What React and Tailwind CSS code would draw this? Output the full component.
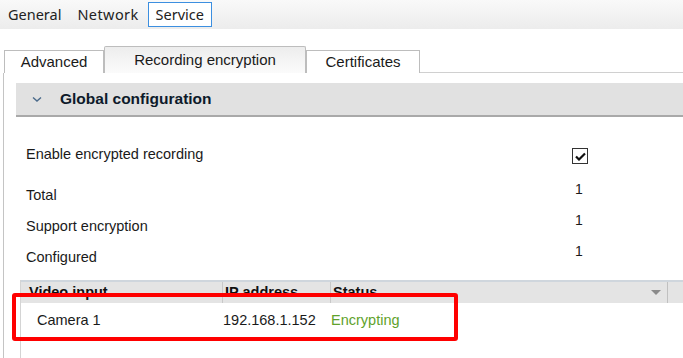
import React from 'react';

const rows = [
  { label: 'Total', value: '1' },
  { label: 'Support encryption', value: '1' },
  { label: 'Configured', value: '1' },
];

const App = () => {
  return (
    <div className="relative w-[683px] h-[358px] overflow-hidden bg-white text-[#1a1a1a]" style={{ fontFamily: '"Liberation Sans", Arial, sans-serif' }}>
      {/* top menu */}
      <div className="h-[29px] flex items-center bg-gradient-to-b from-[#f9f9f9] to-[#ececec] text-[14.5px] text-[#222]" style={{ fontFamily: '"Noto Sans", sans-serif' }}>
        <span className="ml-[8px]">General</span>
        <span className="ml-[16px] tracking-[0.4px]">Network</span>
        <span className="ml-[9px] h-[25px] px-[7px] flex items-center border border-[#3c8fe0] bg-white">Service</span>
      </div>

      {/* tabs */}
      <div className="mt-[17px] h-[27px] flex items-end pl-[4px] text-[15px]">
        <div className="w-[100px] h-[23px] flex items-center justify-center border border-b-0 border-[#bdbdbd] bg-white">Advanced</div>
        <div className="w-[202px] h-[27px] flex items-center justify-center border border-b-0 border-[#bdbdbd] bg-gradient-to-b from-[#ededed] to-[#fbfbfb] rounded-t-[2px]">Recording encryption</div>
        <div className="w-[114px] h-[23px] flex items-center justify-center border border-b-0 border-[#bdbdbd] bg-white">Certificates</div>
        <div className="flex-1 border-b border-[#d0d0d0]" />
      </div>

      {/* panel */}
      <div className="ml-[3px] border-l border-[#c4c4c4] h-[290px] pl-[12px] pt-[10px]">
        <div className="h-[34px] flex items-center bg-[#e1e1e1] border-b-2 border-[#a9a9a9]">
          <svg width="10" height="7" viewBox="0 0 10 7" className="ml-[16px]">
            <path d="M1 1.5 L5 5 L9 1.5" fill="none" stroke="#4a6a8a" strokeWidth="1.4" />
          </svg>
          <span className="ml-[18px] font-bold text-[15.5px] text-[#0d1a2a]">Global configuration</span>
        </div>

        <div className="h-[62px] flex items-end pb-[15px] pl-[10px] text-[14.5px]">
          <span className="w-[546px] -mb-[2px]">Enable encrypted recording</span>
          <span className="w-[16px] h-[16px] border-[1.5px] border-[#333] flex items-center justify-center">
            <svg width="11" height="9" viewBox="0 0 11 9">
              <path d="M1 4.5 L4 7.5 L10 1.5" fill="none" stroke="#111" strokeWidth="2.2" />
            </svg>
          </span>
        </div>

        {rows.map((r) => (
          <div key={r.label} className="h-[31px] flex items-center pl-[10px] text-[14.5px]">
            <span className="w-[549px] mt-[2px]">{r.label}</span>
            <span className="-mt-[10px] text-[14px]">{r.value}</span>
          </div>
        ))}

        {/* table */}
        <div className="mt-[8px] ml-[4px] border-l border-[#d4d4d4] h-[90px]">
          <div className="h-[23px] flex items-center bg-[#e4e4e4] border-t-2 border-[#cfd6dd] text-[14.5px] font-bold text-[#111]">
            <span className="w-[202px] pl-[8px] h-full flex items-center border-r border-[#c8c8c8]">Video input</span>
            <span className="w-[108px] pl-[2px] h-full flex items-center border-r border-[#c8c8c8]">IP address</span>
            <span className="flex-1 pl-[2px]">Status</span>
            <svg width="10" height="6" viewBox="0 0 10 6" className="mr-[6px]">
              <path d="M0 0 L10 0 L5 5 Z" fill="#8a8a8a" />
            </svg>
            <span className="h-full border-l border-[#c0c0c0] w-[16px]" />
          </div>
          <div className="h-[36px] flex items-center text-[14.5px]">
            <span className="w-[202px] pl-[16px]">Camera 1</span>
            <span className="w-[108px]">192.168.1.152</span>
            <span className="text-[#5fa22c]">Encrypting</span>
          </div>
        </div>
      </div>

      {/* highlight box */}
      <div className="absolute left-[12px] top-[293px] w-[446px] h-[48px] border-[4px] border-[#ff0000] rounded-[3px]" />
    </div>
  );
};

export default App;
